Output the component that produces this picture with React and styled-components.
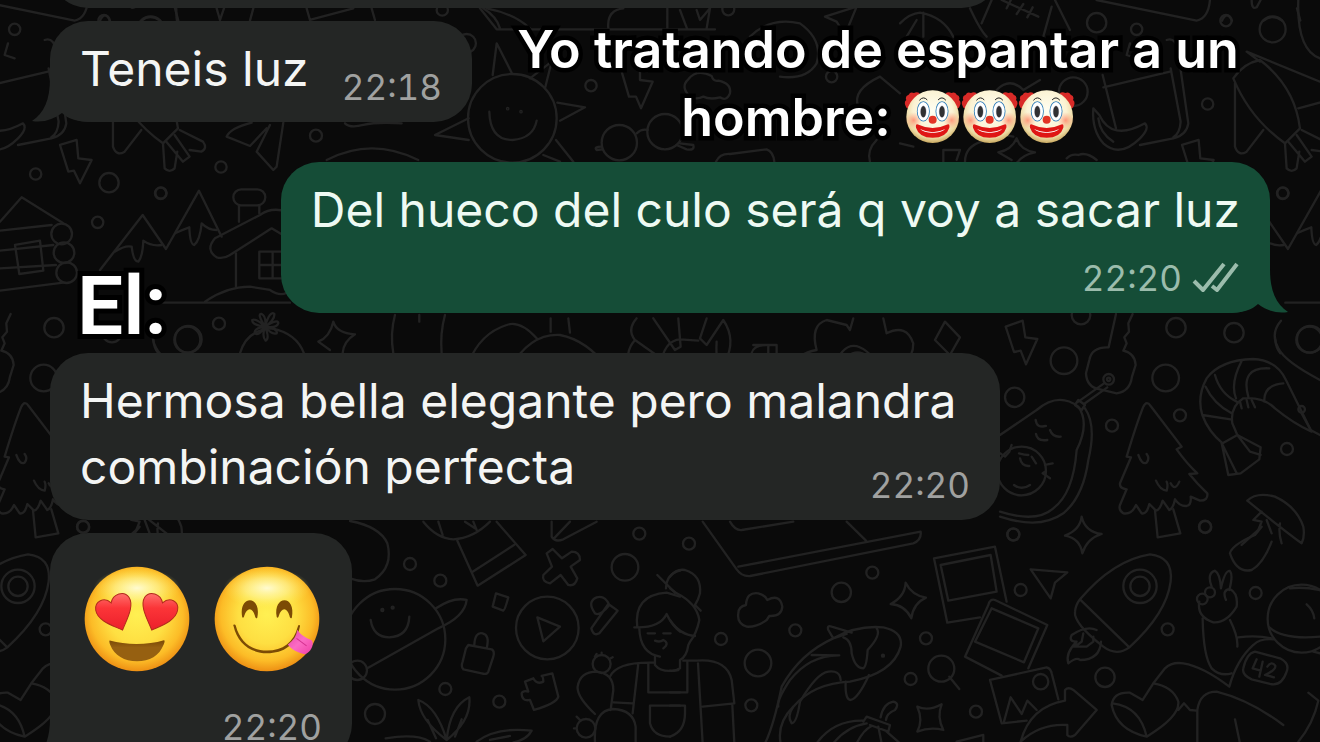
import React from 'react';
import styled, { createGlobalStyle } from 'styled-components';

const GlobalStyle = createGlobalStyle`
  * {
    box-sizing: border-box;
  }
  body {
    margin: 0;
    background: #0a0a0a;
    font-family: Inter, "Liberation Sans", sans-serif;
  }
`;

const Chat = styled.main`
  position: relative;
  height: 100vh;
  overflow: hidden;
  padding: 0 50px;
`;

const Wallpaper = styled.svg`
  position: absolute;
  top: 0;
  left: 0;
  width: 100%;
  height: 100%;
  fill: none;
  stroke: #222;
  stroke-width: 7;
  stroke-linecap: round;
  stroke-linejoin: round;
`;

const Thread = styled.div`
  position: relative;
  display: flex;
  flex-direction: column;
  margin-top: -80px;
`;

const Row = styled.div`
  display: flex;
  align-items: flex-start;
  justify-content: ${(p) => (p.$spread ? 'space-between' : 'flex-start')};
  margin-top: ${(p) => p.$gap || 0}px;
`;

// Text and time share one grid cell, so the time sits beside the last line.
const Bubble = styled.article`
  position: relative;
  isolation: isolate;
  flex: none;
  display: grid;
  grid-template-columns: 1fr;
  grid-template-areas: ${(p) => (p.$stacked ? '"text" "time"' : '"text"')};
  row-gap: 6px;
  width: ${(p) => p.$width};
  min-height: 88px;
  padding: 15px 30px 13px;
  border-radius: 38px;
  background: ${(p) => (p.$sent ? '#154d37' : '#242625')};
  color: ${(p) => (p.$sent ? '#eefaf3' : '#f4f5f4')};

  time {
    grid-area: ${(p) => (p.$stacked ? 'time' : 'text')};
  }
`;

const Text = styled.p`
  grid-area: text;
  margin: 0 0 7px;
  font-size: 48px;
  line-height: 66px;
  white-space: nowrap;
`;

const Time = styled.time`
  display: flex;
  align-items: center;
  align-self: end;
  justify-self: end;
  gap: 10px;
  font-size: 35px;
  font-variant-numeric: tabular-nums;
  line-height: 44px;
  color: ${(p) => (p.$sent ? '#9bbcac' : '#a0a1a0')};
`;

const Tail = styled.svg`
  position: absolute;
  z-index: -1;
  bottom: 0;
  width: 60px;
  height: 44px;
  ${(p) => (p.$sent ? 'right: -18px; transform: scaleX(-1);' : 'left: -18px;')}
  fill: ${(p) => (p.$sent ? '#154d37' : '#242625')};
`;

const Caption = styled.h1`
  flex: 1;
  margin: -5px -14px 0 0;
  color: #fff;
  font-size: 52px;
  font-weight: 600;
  line-height: 68px;
  text-align: center;
  -webkit-text-stroke: 9px #000;
  paint-order: stroke fill;
`;

const Label = styled.h2`
  margin: 97px 0 0 27px;
  color: #fff;
  font-family: Roboto, "Liberation Sans", sans-serif;
  font-size: 82px;
  font-weight: 600;
  line-height: 94px;
  -webkit-text-stroke: 10px #000;
  paint-order: stroke fill;
`;

const Faces = styled.div`
  grid-area: text;
  display: flex;
  gap: 24px;
  padding: 18px 0 27px 4px;
`;

const Face = styled.svg`
  display: block;
  width: 106px;
  height: 106px;
`;

const ClownFace = styled.svg`
  width: 57px;
  height: 55px;
  vertical-align: -8px;
`;

const Checks = styled.svg`
  width: 48px;
  height: 32px;
  overflow: visible;
  fill: none;
  stroke: currentColor;
  stroke-width: 4;
  stroke-linejoin: round;
`;

const Defs = styled.svg`
  position: absolute;
  width: 0;
  height: 0;
`;

// The wallpaper repeats sideways every TILE pixels. Shapes are drawn at 3x.
const TILE = 1122;

const doodles = [
  {
    x: 0,
    y: 0,
    circles: [
      [107, 522, 17], [327, 548, 29], [483, 579, 17], [663, 501, 17], [948, 407, 18],
      [293, 667, 17], [565, 1018, 40], [657, 971, 18], [1327, 30, 17],
      [185, 702, 31], [192, 758, 31], [200, 818, 31], [1400, 130, 28],
    ],
    paths: [
      'M180 435L230 420L235 475L275 480L240 550L222 512L205 515Z',
      'M300 810L428 645L498 747L597 572L665 710',
      'M345 755Q375 735 395 740Q400 785 415 785Q428 770 430 722Q455 740 485 735',
      'M525 700Q545 690 568 682Q570 735 583 735Q600 720 605 670Q625 690 650 690',
      'M724 568h48a24 24 0 0 1 0 48h-48a24 24 0 0 1 0 -48M717 618V665M778 618V640',
      'M860 635Q815 620 780 645L645 715Q615 750 650 772Q670 778 690 765L815 685L860 712',
      'M708 760V860M778 755h80v80h-80zM818 755V835M778 795H858',
      'M615 905Q680 860 750 860L810 870Q840 890 860 878M490 908H870',
      'M980 480Q1115 410 1255 480',
      'M0 665L65 592L190 670M0 692L155 675M0 752L160 735M0 805L168 795M0 872L190 848',
      'M45 735L120 722L130 812L58 822Z',
      'M755 368Q690 385 680 410L750 438L800 385M810 375L770 455L820 510L830 500L850 368',
      'M1035 370Q1050 385 1090 375T1205 370',
      'M525 25L535 62M650 25L660 60L672 25M750 62L760 25M920 25L930 60L1060 25M1115 25L1125 60',
      'M300 62Q315 30 330 62M425 62Q450 40 480 62M1450 25Q1490 50 1500 85',
      'M720 1060Q740 990 815 985Q890 1000 912 1060M460 1020Q462 1045 475 1060',
      'M795 980Q770 940 785 942Q800 950 795 980Q810 930 823 942Q825 960 795 980Q835 955 835 970Q830 985 795 980Q835 985 830 1000Q815 1005 795 980Q810 1015 797 1022Q785 1010 795 980Q775 1010 765 1000Q760 985 795 980Q755 975 757 960Q770 955 795 980',
      'M1000 965Q1010 1000 1065 1003Q1030 1025 1028 1060M1000 965Q990 1010 955 1025L990 1050',
      'M1185 945Q1170 1000 1180 1060M1335 945Q1320 1000 1325 1060M1258 945v20',
    ],
  },
  {
    x: 480,
    y: 0,
    circles: [[97, 355, 133], [83, 326, 2], [123, 335, 2], [745, 28, 18], [333, 257, 17], [1055, 230, 17], [418, 428, 53], [555, 395, 53]],
    paths: [
      'M28 335Q30 420 98 420Q160 415 170 362',
      'M38 225L50 130L95 218M195 265L215 185L150 235M232 308L315 322L240 362M228 420L280 485M190 465L240 485M-34 355L-135 405L-34 420',
      'M0 25L50 88H705M20 25Q100 40 150 85M385 85Q380 30 430 25M562 25V85M600 30L622 88M650 30L660 60L690 25L680 85',
      'M425 215L447 290L468 290L483 325L518 245L480 240V215',
      'M630 290Q600 260 625 238Q650 205 695 228Q700 245 715 242Q755 250 750 280Q740 305 720 292Q690 300 670 290Q650 300 630 290Z',
      'M470 400Q485 385 503 390M365 440Q340 440 350 450L368 448M600 430L640 435Q645 452 620 448L590 435',
      'M810 110Q870 50 960 70Q1030 120 1010 190Q980 240 900 230',
      'M1130 20L1035 50L1070 65L1095 105ZM708 485Q720 460 750 462L860 448Q880 455 883 485',
      'M1135 320Q1115 270 1200 230L1260 280M1190 420Q1160 450 1170 485',
    ],
  },
  {
    x: 900,
    y: 0,
    circles: [[590, 68, 29], [710, 88, 17], [978, 62, 17], [1118, 88, 39], [923, 312, 17], [1148, 580, 17], [520, 275, 43]],
    paths: [
      'M590 0L890 62Q925 55 930 0M1055 0Q1055 30 1070 22L1082 0M1195 0Q1190 150 1260 175',
      'M210 25Q240 90 260 110M245 70L275 0M305 0L415 50M335 -5L320 25M370 12L350 42M398 22L382 52M465 0L510 90M455 20L430 110',
      'M0 70Q30 40 60 38Q130 50 160 110M70 38V110M20 110L50 60',
      'M608 225L648 385M610 262L810 215M690 130L680 165L710 175M800 120Q830 110 835 160L865 370Q860 405 820 415L720 435M812 205L842 365Q840 400 820 412',
      'M580 325L598 345Q635 425 735 370Q750 385 720 415Q660 475 610 430Q575 390 580 325ZM595 355Q600 400 640 425',
      'M1000 235Q1030 190 1080 180Q1185 260 1200 385L1155 430Q1050 355 1000 235Z',
      'M1005 250V440Q1015 470 1040 455L1090 390M1080 185L1040 155Q1150 200 1260 245M1195 325L1270 305',
      'M1155 430L1160 505Q1175 520 1190 505L1198 455M1205 390L1275 425Q1290 445 1270 455L1235 450M1165 425L1215 485L1235 470L1190 405',
      'M350 415Q360 450 405 457Q365 465 350 490M350 415Q335 450 295 457L335 480M500 475Q515 460 535 465Q560 455 590 480',
      'M130 485V450H180L170 480M195 485Q195 440 245 425Q300 400 340 410M290 270Q330 230 370 270L420 240M0 430L40 440',
    ],
  },
  {
    x: 1000,
    y: 300,
    circles: [
      [243, 45, 28], [192, 182, 40], [44, 292, 29], [528, 83, 29], [702, 98, 29], [497, 234, 40], [336, 377, 18],
      [540, 346, 18], [861, 447, 18], [615, 680, 18], [40, 703, 18], [326, 238, 16], [326, 238, 5], [928, 119, 39], [905, 328, 10], [65, 513, 73],
    ],
    paths: [
      'M17 80L68 62L76 112L112 117L78 193L62 152L42 156Z',
      'M348 42L326 142Q275 140 268 180L258 220Q260 262 300 268L350 280Q390 275 396 230L407 195Q405 160 370 152L380 130L373 112L387 95L385 70L398 42',
      'M312 250L235 305M322 262L252 312M235 300L255 315L245 330L225 315Z',
      'M0 405L110 330Q175 275 235 320Q270 370 230 450Q220 580 160 625Q110 670 0 635M255 325Q290 375 265 480Q250 590 190 640Q120 690 0 650',
      'M107 360Q110 385 138 378M108 402Q112 425 142 420M150 390Q158 412 182 410M57 460Q75 465 85 465M60 475Q65 500 88 498M95 470L108 490M42 555Q65 572 90 555M0 460L15 470L28 455L35 435M135 495L158 490M135 515L128 520L150 535',
      'M380 470Q410 370 430 320Q440 300 452 318L545 440L530 448Q560 490 592 520L568 522Q590 550 622 580Q625 602 600 602L572 590Q575 615 560 618Q540 620 525 598Q520 625 508 630L488 602Q480 630 468 632L448 612Q440 645 425 640L408 615Q395 645 370 640Q355 630 360 615L380 568Q358 565 360 550L393 472Z',
      'M465 632L473 712L541 700L520 628M415 465Q425 495 440 488Q450 475 440 462M468 542Q480 570 500 572Q505 555 500 545M512 550Q525 575 538 545',
      'M607 345Q590 290 620 235Q660 180 760 177Q830 180 858 240L935 395Q880 370 825 325Q790 290 730 295Q690 320 697 370L712 405L668 430Q625 395 607 345L692 358M617 260Q640 310 695 340M645 225Q660 280 710 305M725 183Q690 250 708 295M808 205Q720 200 745 290M850 250Q790 255 793 305',
      'M712 405L782 442L778 478L722 520L685 525L665 430M712 405L750 455L782 465M668 435L710 520M905 340L932 390L960 405M720 305L725 325M740 300L745 322M755 300L765 322',
      'M843 62Q810 100 835 145Q855 185 960 240',
      'M742 602Q770 575 825 590Q890 620 910 680Q915 710 905 730Q850 690 742 602M785 635L760 660L785 665L775 690L725 735M800 660L815 700M840 670Q835 700 845 730',
      'M245 650Q255 695 305 702Q262 715 247 760Q240 715 195 707Q240 690 245 650Z',
    ],
  },
  {
    x: 330,
    y: 300,
    circles: [],
    paths: [
      'M415 190Q450 100 530 75Q570 60 620 115M410 193H540M540 205Q600 100 690 105Q770 120 835 205',
      'M662 55V95M715 55L720 98M920 55Q890 90 915 120Q880 160 905 205M915 120L1000 180M970 55L1035 150L1052 140L1045 55M1130 55L1110 115L1130 135L1180 60Q1220 120 1185 185Q1155 210 1160 125M1050 118L1105 122M990 205Q1000 120 1052 118',
      'M1270 135H1340V205M1315 135V205M1310 190Q1260 200 1265 160Q1270 135 1310 135',
      'M1395 205Q1400 160 1460 150Q1440 75 1490 60L1550 75L1560 90L1570 55M1660 55L1670 100Q1730 70 1750 130Q1750 170 1725 180L1765 205M1510 205Q1560 70 1655 205M1525 205Q1580 110 1645 205',
      'M1845 65L1890 112L1860 165L1815 120Z',
    ],
  },
  {
    x: 350,
    y: 510,
    circles: [
      [180, 162, 18], [271, 212, 18], [286, 537, 18], [75, 612, 30], [448, 575, 18], [825, 172, 40], [868, 71, 18],
      [135, 388, 151], [22, 481, 29], [592, 354, 94], [97, 300, 3], [128, 293, 3], [755, 462, 27], [708, 655, 28],
    ],
    paths: [
      'M0 33Q90 50 112 100Q130 170 75 208Q40 220 0 205',
      'M220 35Q260 85 310 88Q370 85 420 35M265 35L278 75M345 35L375 55M370 35L380 60',
      'M322 92L383 227L527 135L440 35M368 185L492 105',
      'M62 330Q70 382 118 382Q175 380 178 320M258 295Q310 260 350 270Q345 320 265 355L52 475',
      'M438 250L475 262Q465 300 460 302L428 290Z',
      'M355 405L425 418Q435 425 430 440L415 485Q410 495 395 490L340 478Q332 470 338 455L348 415ZM373 405Q375 365 398 370Q420 375 410 415',
      'M562 322L630 350L580 394Z',
      'M605 35V80Q615 98 640 88L740 35M612 85L660 35',
      'M590 130L608 117L636 145L665 125Q690 125 690 150L662 170L682 205Q675 230 655 225L632 195L600 220Q575 215 580 195L606 170Z',
      'M748 370Q730 380 724 355L775 282L803 302ZM735 310Q710 275 740 262Q765 255 778 285Q750 320 735 310',
      'M552 600L540 570Q515 575 515 550Q520 540 535 545L525 515L550 505Q560 525 580 515Q580 500 575 498L607 490L625 560Q620 580 552 600Z',
      'M290 690Q210 630 205 570Q260 590 290 690Q300 590 358 562Q365 630 290 690M107 685Q200 670 240 695M380 695Q440 650 545 662Q530 690 490 697M233 630L258 685M335 628L315 680M420 690L480 678',
      'M922 195L975 248M948 235Q950 190 990 182M862 352Q850 255 950 248L990 260M853 352Q930 355 950 312Q965 345 990 365M868 355Q870 430 930 440M893 370h22M940 370h22M915 392Q930 398 940 390Q960 400 940 415',
      'M915 440V465Q935 490 985 480M780 500Q800 455 910 458M865 460L848 610M895 460V547H990M900 587H990M900 587V640Q910 680 960 680M790 577L848 580',
      'M735 612Q680 560 683 530Q690 485 740 485Q790 490 790 540L782 600M735 695Q730 600 790 597Q850 600 857 650V700M735 440L740 432M755 435V428M778 447L788 442M690 630L680 620M678 655H672',
    ],
  },
  {
    x: 670,
    y: 510,
    circles: [
      [57, 101, 18], [607, 188, 18], [514, 247, 29], [153, 387, 18], [376, 361, 18], [264, 459, 40], [244, 586, 18],
      [768, 385, 18], [722, 507, 18], [814, 476, 39], [918, 605, 18], [639, 437, 3],
    ],
    paths: [
      'M98 35L200 178Q215 200 240 198L730 100Q755 90 752 65L205 170M180 35Q195 62 215 60L370 35M530 35L588 92',
      'M0 235L20 250Q80 280 88 330Q80 370 60 395L55 405Q50 440 30 450V475Q15 485 0 482M0 200Q20 175 45 180Q95 195 90 250Q85 270 75 285L92 302M0 330Q30 375 75 378',
      'M40 452H80Q170 445 185 510L193 580L98 590M52 455V547H0M84 460L98 700M187 585L193 700M0 587H45V610Q45 665 0 680',
      'M290 330Q260 352 230 350Q200 340 205 310Q205 290 228 285Q230 245 265 250Q285 255 292 270Q330 250 337 290Q335 320 298 318Z',
      'M530 372L490 385L475 360Q470 345 485 350L545 368M490 385Q390 430 335 530Q310 650 285 700M490 385Q560 345 640 352Q700 365 692 410Q670 490 540 515Q430 520 370 590Q320 640 332 700',
      'M520 382Q545 390 545 430Q555 475 580 475Q590 470 593 420Q635 375 620 355M508 436Q420 435 360 510Q320 570 325 590M425 435L508 436M512 510Q510 480 475 485Q440 490 390 575Q380 640 365 640Q350 620 370 590M527 515Q525 570 542 570Q565 565 597 495',
      'M707 218Q725 255 768 263Q730 280 724 325Q705 285 662 282Q705 260 707 218Z',
      'M838 500L868 537M930 322L832 338L792 145L975 110L1010 275M812 165L962 135L980 245L835 272Z',
      'M742 590Q775 605 815 583Q800 620 820 660Q780 650 742 665Q760 630 742 590Z',
      'M440 700Q490 630 580 632M490 700Q530 650 590 640M580 635L590 620L660 645L655 665L600 645M560 700Q580 660 605 648M625 650L635 700M650 665L690 700M632 622Q640 580 670 575Q690 580 675 600Q650 610 648 630M860 695L940 675V700',
    ],
  },
  {
    x: 990,
    y: 510,
    circles: [
      [70, 74, 18], [646, 51, 18], [92, 240, 18], [533, 358, 18], [345, 502, 29], [797, 249, 18], [450, 229, 50],
      [450, 229, 29], [152, 515, 23], [935, 326, 102], [660, 247, 15], [637, 267, 16],
    ],
    paths: [
      'M122 178L232 187L195 218L182 265Z',
      'M270 268Q370 150 480 133Q550 140 542 215Q530 310 418 412Q380 440 340 410Q250 340 255 305Q257 285 270 268L418 412',
      'M320 360Q290 345 245 375Q235 395 260 395Q225 430 235 460Q260 440 270 450Q330 450 333 395M280 370L275 395Q265 405 250 410L290 410L310 395V380',
      'M35 497L-75 440L-5 285Q0 265 15 270L172 345L115 475M5 295L145 355L102 457L-45 395Z',
      'M0 510L170 472Q182 475 185 490L205 568M0 510L35 640L110 632M42 635L62 562L95 612L112 572L140 600',
      'M92 695Q120 590 225 572V540Q235 530 250 540L320 600L255 675Q240 685 232 675V645Q150 640 92 695Z',
      'M720 130Q725 105 795 75L815 50M845 95Q820 160 785 180Q740 190 720 130',
      'M665 230Q650 190 675 182Q690 190 693 235Q705 180 720 183Q730 195 718 240M708 270Q695 240 720 237Q745 250 740 290Q710 340 670 337Q620 320 628 275M638 325Q640 440 665 475Q690 500 725 490M720 330Q745 380 742 410M745 382Q800 375 845 385',
      'M838 352Q880 390 990 380M900 235Q940 230 990 240M950 283Q970 300 973 325',
      'M795 425L870 445Q900 460 890 485Q875 530 840 522L785 508Q755 495 760 475Q770 430 795 425Z',
      'M490 520L525 475Q545 455 580 460Q640 470 718 530Q740 450 790 405Q810 385 850 388M490 520L458 570L420 548Q370 545 365 585Q380 660 470 680Q570 620 565 575Q550 530 490 520M368 580Q450 590 470 680M565 600L582 580L600 600L620 602',
      'M880 645Q780 570 680 545Q630 545 622 600V700M735 628L750 700M955 548L985 572Q970 640 925 695M970 425L990 430',
      'M800 448L788 475L812 482M818 455L808 500M832 470Q845 452 856 467Q858 480 825 495L852 502',
    ],
  },
];

function Doodles() {
  return (
    <Wallpaper viewBox="0 0 1320 742" preserveAspectRatio="xMinYMin slice" aria-hidden="true">
      <defs>
        <g id="tile">
          {doodles.map((d) => (
            <g key={`${d.x}-${d.y}`} transform={`translate(${d.x} ${d.y}) scale(0.3333)`}>
              {d.paths.map((path) => (
                <path key={path} d={path} />
              ))}
              {d.circles.map(([cx, cy, r]) => (
                <circle key={`${cx}-${cy}-${r}`} cx={cx} cy={cy} r={r} />
              ))}
            </g>
          ))}
        </g>
      </defs>
      <use href="#tile" x={-TILE} />
      <use href="#tile" />
      <use href="#tile" x={TILE} />
    </Wallpaper>
  );
}

function Gradients() {
  return (
    <Defs aria-hidden="true">
      <defs>
        <radialGradient id="skin" cx="50%" cy="46%" r="55%">
          <stop offset="0" stopColor="#fff052" />
          <stop offset="0.5" stopColor="#fedf42" />
          <stop offset="0.8" stopColor="#fcbc27" />
          <stop offset="1" stopColor="#ec8b12" />
        </radialGradient>
        <radialGradient id="shine">
          <stop offset="0" stopColor="#fffcd8" stopOpacity="0.95" />
          <stop offset="0.5" stopColor="#fff9a8" stopOpacity="0.55" />
          <stop offset="1" stopColor="#ffee58" stopOpacity="0" />
        </radialGradient>
        <linearGradient id="heart" x1="0" y1="0" x2="0" y2="1">
          <stop offset="0" stopColor="#ff6f6c" />
          <stop offset="0.4" stopColor="#fb3538" />
          <stop offset="1" stopColor="#ec1f2b" />
        </linearGradient>
        <linearGradient id="mouth" x1="0" y1="0" x2="0" y2="1">
          <stop offset="0" stopColor="#7a4905" />
          <stop offset="0.35" stopColor="#966011" />
          <stop offset="1" stopColor="#966011" />
        </linearGradient>
        <linearGradient id="tongue" x1="0" y1="0" x2="1" y2="1">
          <stop offset="0" stopColor="#e443a4" />
          <stop offset="0.5" stopColor="#fb6cc4" />
          <stop offset="1" stopColor="#f03fa6" />
        </linearGradient>
        <radialGradient id="clown" cx="50%" cy="38%" r="62%">
          <stop offset="0" stopColor="#fffef2" />
          <stop offset="0.6" stopColor="#fbf3d4" />
          <stop offset="0.85" stopColor="#ecd9a0" />
          <stop offset="1" stopColor="#c9a961" />
        </radialGradient>
        <radialGradient id="cheek">
          <stop offset="0" stopColor="#ff7d62" stopOpacity="0.75" />
          <stop offset="1" stopColor="#ff9d7a" stopOpacity="0" />
        </radialGradient>
      </defs>
    </Defs>
  );
}

function HeartEyes() {
  return (
    <Face viewBox="0 0 316 316" role="img" aria-label="😍">
      <circle cx="158" cy="158" r="156" fill="url(#skin)" />
      <ellipse cx="158" cy="66" rx="130" ry="60" fill="url(#shine)" />
      <g fill="url(#heart)" stroke="#b32a1c" strokeWidth="3">
        <path d="M115 191C87 178 40 164 35 132C31 105 60 91 81 110C86 83 119 72 134 93C151 119 127 160 115 191Z" />
        <path d="M202 191C230 178 273 164 279 132C284 105 256 91 234 110C229 83 196 72 181 93C165 119 190 160 202 191Z" />
      </g>
      <path d="M77 222C126 236 190 236 238 221C242 221 240 228 238 233C224 268 196 284 158 284C120 284 91 268 78 235C76 229 74 221 77 222Z" fill="url(#mouth)" />
    </Face>
  );
}

function Yummy() {
  return (
    <Face viewBox="0 0 316 316" role="img" aria-label="😋">
      <circle cx="158" cy="158" r="156" fill="url(#skin)" />
      <ellipse cx="158" cy="66" rx="130" ry="60" fill="url(#shine)" />
      <g fill="#7c4b05">
        <path d="M84 152C78 120 92 102 107 102C122 102 136 120 129 154C126 158 123 154 122 148C115 122 98 122 90 149C89 154 86 156 84 152Z" />
        <path d="M187 152C181 120 195 102 210 102C225 102 239 120 232 154C229 158 226 154 225 148C218 122 201 122 193 149C192 154 189 156 187 152Z" />
        <path d="M58 178C55 174 63 173 65 178C78 227 112 252 158 252C205 252 238 227 250 180C252 173 258 175 256 181C245 235 208 260 158 260C107 260 69 228 58 178Z" />
      </g>
      <path d="M248 190C260 208 278 215 292 222C300 236 286 258 272 263C252 260 232 250 220 234C236 222 246 210 248 190Z" fill="url(#tongue)" />
      <path d="M246 216L276 238" stroke="#d3318f" strokeWidth="3" />
    </Face>
  );
}

function Clown() {
  return (
    <ClownFace viewBox="13 25 171 165" role="img" aria-label="🤡">
      <g fill="#d92a27">
        <path d="M18 76Q12 64 20 58Q15 46 27 42Q32 32 43 37Q52 32 60 38L34 84Q20 86 18 76Z" />
        <path d="M180 76Q186 64 178 58Q183 46 171 42Q166 32 155 37Q146 32 138 38L164 84Q178 86 180 76Z" />
      </g>
      <circle cx="99" cy="108" r="79" fill="url(#clown)" />
      <circle cx="42" cy="119" r="25" fill="url(#cheek)" />
      <circle cx="156" cy="119" r="25" fill="url(#cheek)" />
      <g fill="none" stroke="#222" strokeWidth="3" strokeLinecap="round">
        <path d="M60 58Q71 45 82 57M116 57Q127 45 138 58" />
      </g>
      <g fill="#fff" stroke="#2a7ab8" strokeWidth="5">
        <ellipse cx="71" cy="92" rx="17" ry="28" />
        <ellipse cx="127" cy="92" rx="17" ry="28" />
      </g>
      <g fill="#303033" stroke="#99a" strokeWidth="2">
        <ellipse cx="71" cy="93" rx="8" ry="17" />
        <ellipse cx="127" cy="93" rx="8" ry="17" />
      </g>
      <circle cx="99" cy="117" r="12" fill="#e33425" />
      <path d="M57 132Q99 152 141 132Q151 127 149 141Q140 171 99 171Q58 171 49 141Q47 127 57 132Z" fill="#df1615" />
      <path d="M61 145Q99 164 137 145Q127 156 99 157Q71 156 61 145Z" fill="#fff" />
    </ClownFace>
  );
}

function BubbleTail({ sent }) {
  return (
    <Tail $sent={sent} viewBox="0 0 60 44" aria-hidden="true">
      <path d="M18 0C18 22 12 35 0 43C12 45 22 41 30 35C36 41 46 44 60 44V0Z" />
    </Tail>
  );
}

function App() {
  return (
    <Chat>
      <GlobalStyle />
      <Gradients />
      <Doodles />
      <Thread>
        <Row>
          <Bubble $width="950px" />
        </Row>
        <Row $gap={13}>
          <Bubble $width="422px">
            <Text>Teneis luz</Text>
            <Time>22:18</Time>
            <BubbleTail />
          </Bubble>
          <Caption>
            Yo tratando de espantar a un
            <br />
            hombre: <Clown />
            <Clown />
            <Clown />
          </Caption>
        </Row>
        <Row $spread $gap={10}>
          <Label>El:</Label>
          <Bubble $sent $stacked>
            <Text>Del hueco del culo será q voy a sacar luz</Text>
            <Time $sent>
              22:20
              <Checks viewBox="0 0 48 32" role="img" aria-label="Leído">
                <path d="M2 19L11 28L32 2" />
                <path d="M20 24L25 28L45 2" />
              </Checks>
            </Time>
            <BubbleTail sent />
          </Bubble>
        </Row>
        <Row>
          <Bubble $width="950px">
            <Text>
              Hermosa bella elegante pero malandra
              <br />
              combinación perfecta
            </Text>
            <Time>22:20</Time>
          </Bubble>
        </Row>
        <Row $gap={13}>
          <Bubble $stacked $width="302px">
            <Faces>
              <HeartEyes />
              <Yummy />
            </Faces>
            <Time>22:20</Time>
            <BubbleTail />
          </Bubble>
        </Row>
      </Thread>
    </Chat>
  );
}

export default App;
